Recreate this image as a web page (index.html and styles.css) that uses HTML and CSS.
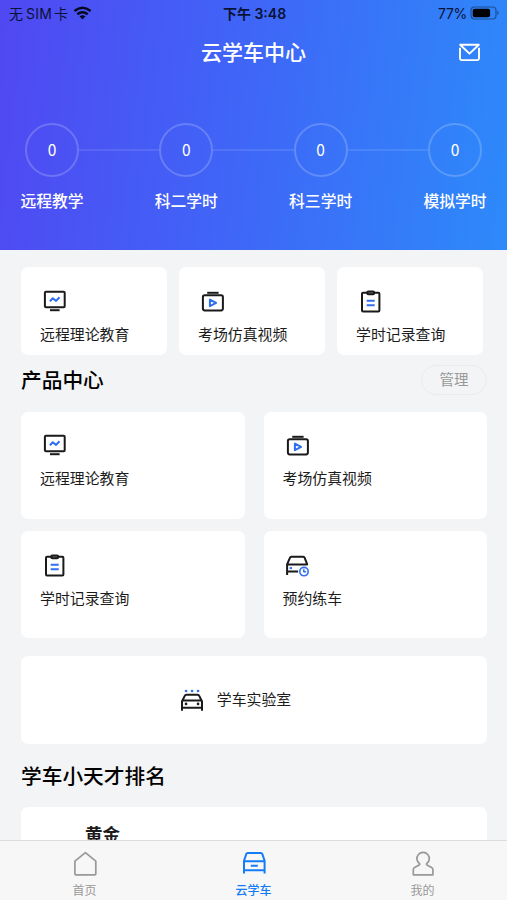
FILE: index.html
```
<!DOCTYPE html>
<html lang="zh-CN">

<head>
    <meta charset="UTF-8" />
    <meta name="viewport" content="width=device-width, initial-scale=1.0" />
    <title>云学车中心</title>
    <link rel="stylesheet" href="styles.css">
</head>

<body>
    <!-- shared icons -->
    <svg class="icon-defs" width="0" height="0">
        <symbol id="icon-screen" viewBox="0 0 24 24">
            <rect x="1.9" y="2.8" width="19.8" height="15.4" rx="1" />
            <path d="M7 21.2h9.6" />
            <path class="blue" d="M6.9 12.3l2.9-3 3.3 2.6 3.4-3.6" />
        </symbol>
        <symbol id="icon-video" viewBox="0 0 24 24">
            <path d="M6.2 3.8h11.4" />
            <rect x="1.9" y="6.2" width="20" height="15.2" rx="1.8" />
            <path class="blue" d="M8.9 10.6v6.6l6.2-3.3z" />
        </symbol>
        <symbol id="icon-record" viewBox="0 0 24 24">
            <rect x="3" y="3.8" width="17.4" height="18.6" rx="1" />
            <rect class="clip" x="8.3" y="2.4" width="6.8" height="2.8" rx="1" />
            <path class="blue" d="M7.7 11.7h8M7.7 16.2h8" />
        </symbol>
        <symbol id="icon-booking" viewBox="0 0 24 24">
            <path d="M1.1 21.9V11.4L3.9 4.8q.4-1 1.4-1h12q1 0 1.4 1l2.5 6.6H1.1M1.1 18.6h11" />
            <path class="blue" d="M3.6 15.1h2.4" />
            <circle class="blue thin" cx="18" cy="18.6" r="4.2" />
            <path class="blue thin" d="M17.8 16.2v2.5h2.3" />
        </symbol>
        <symbol id="icon-lab" viewBox="0 0 24 24">
            <path d="M2 22.8v-9.3l2.6-5.4q.6-1.3 1.9-1.3h11q1.3 0 1.9 1.3l2.6 5.4v9.3M2 12.5h20M2 19.7h20" />
            <path class="dot" d="M6 15.9h.1M18 15.9h.1" />
            <path class="blue dot" d="M6 3h.1M12 3h.1M18 3h.1" />
        </symbol>
    </svg>

    <div class="app">
        <header class="header">
            <div class="status-bar">
                <div class="status-left">
                    <span>无<span class="sim">SIM</span>卡</span>
                    <svg class="wifi" viewBox="0 0 20 15">
                        <path d="M1.3 5.3q8.7-7 17.4 0M4.4 8.8q5.6-4.4 11.2 0" />
                        <path class="wifi-dot" d="M6.8 11.1q3.2-2.4 6.4 0L10 14.4z" />
                    </svg>
                </div>
                <div class="status-time">下午 3:48</div>
                <div class="status-right">
                    <span>77%</span>
                    <svg class="battery" viewBox="0 0 30 14">
                        <rect class="battery-shell" x="1" y="1" width="25" height="12" rx="3.4" />
                        <rect x="2.7" y="2.7" width="17.4" height="8.6" rx="2" />
                        <path class="battery-tip" d="M27.4 4.6q2.6 2.4 0 4.8z" />
                    </svg>
                </div>
            </div>

            <div class="nav-bar">
                <h1>云学车中心</h1>
                <svg class="mail" viewBox="0 0 24 20">
                    <path d="M2 5v11.4q0 1.6 1.6 1.6h16.8q1.6 0 1.6-1.6V5" />
                    <path d="M2.2 1.8h19.6L12 11.2z" />
                </svg>
            </div>

            <div class="progress">
                <div class="step">
                    <div class="circle">0</div>
                    <div class="step-name">远程教学</div>
                </div>
                <div class="line"></div>
                <div class="step">
                    <div class="circle">0</div>
                    <div class="step-name">科二学时</div>
                </div>
                <div class="line"></div>
                <div class="step">
                    <div class="circle">0</div>
                    <div class="step-name">科三学时</div>
                </div>
                <div class="line"></div>
                <div class="step">
                    <div class="circle">0</div>
                    <div class="step-name">模拟学时</div>
                </div>
            </div>
        </header>

        <main class="content">
            <div class="quick-row">
                <div class="card">
                    <svg class="icon"><use href="#icon-screen" /></svg>
                    <p>远程理论教育</p>
                </div>
                <div class="card">
                    <svg class="icon"><use href="#icon-video" /></svg>
                    <p>考场仿真视频</p>
                </div>
                <div class="card">
                    <svg class="icon"><use href="#icon-record" /></svg>
                    <p>学时记录查询</p>
                </div>
            </div>

            <div class="section-title">
                <h2>产品中心</h2>
                <button class="manage">管理</button>
            </div>

            <div class="product-grid">
                <div class="card">
                    <svg class="icon"><use href="#icon-screen" /></svg>
                    <p>远程理论教育</p>
                </div>
                <div class="card">
                    <svg class="icon"><use href="#icon-video" /></svg>
                    <p>考场仿真视频</p>
                </div>
                <div class="card">
                    <svg class="icon"><use href="#icon-record" /></svg>
                    <p>学时记录查询</p>
                </div>
                <div class="card">
                    <svg class="icon"><use href="#icon-booking" /></svg>
                    <p>预约练车</p>
                </div>
            </div>

            <div class="lab">
                <svg class="icon"><use href="#icon-lab" /></svg>
                <p>学车实验室</p>
            </div>

            <h2 class="rank-title">学车小天才排名</h2>
            <div class="rank-card">黄金</div>
        </main>

        <nav class="tab-bar">
            <div class="tab">
                <svg class="tab-icon" viewBox="0 0 26 26">
                    <path d="M2.9 10.2L13.4 1.6l10.4 8.6v12.6q0 1-1 1H3.9q-1 0-1-1z" />
                </svg>
                <span>首页</span>
            </div>
            <div class="tab active">
                <svg class="tab-icon" viewBox="0 0 26 26">
                    <path d="M3 22.4V9.8l2.2-6.6q.4-1.1 1.5-1.1h13.2q1.1 0 1.5 1.1l2.2 6.6v12.6M3 10.2h20.6M3 19.2h20.6M9.8 14.8h7" />
                </svg>
                <span>云学车</span>
            </div>
            <div class="tab">
                <svg class="tab-icon" viewBox="0 0 26 26">
                    <path d="M9.6 12.7a6.2 6.2 0 1 1 7 0v1l5 2.8q1.3.8 1.3 2v5.3H3.3v-5.3q0-1.2 1.3-2l5-2.8z" />
                </svg>
                <span>我的</span>
            </div>
        </nav>
    </div>
</body>

</html>
```
FILE: styles.css
```
:root {
    --page-bg: #f2f4f5;
    --card-bg: #ffffff;
    --text: #1c1c1c;
    --blue: #2f6ff0;
    --active: #147df5;
    --muted: #999999;
}

* {
    box-sizing: border-box;
}

body {
    margin: 0;
    font-family: "Liberation Sans", "Noto Sans CJK SC", sans-serif;
    background: var(--page-bg);
    color: var(--text);
}

h1,
h2,
p {
    margin: 0;
}

svg {
    display: block;
    fill: none;
    stroke-linejoin: round;
}

.icon-defs {
    position: absolute;
}

.app {
    display: flex;
    flex-direction: column;
    height: 900px;
    overflow: hidden;
}

/* Header */
.header {
    flex: none;
    height: 250px;
    background: linear-gradient(97deg, #5048f2 0%, #3f66f7 48%, #2d8afa 100%);
    color: #fff;
}

.status-bar {
    display: grid;
    grid-template-columns: 1fr auto 1fr;
    align-items: center;
    height: 28px;
    padding: 0 7px 0 9px;
    font-family: Inter, "Noto Sans CJK SC", sans-serif;
    font-size: 14px;
    line-height: 20px;
    color: #0b1238;
}

.status-left,
.status-right {
    display: flex;
    align-items: center;
}

.status-left {
    gap: 5px;
}

.sim {
    margin: 0 2px 0 3px;
    letter-spacing: 0.2px;
}

.status-right {
    justify-content: flex-end;
    gap: 3px;
}

.status-right span {
    letter-spacing: -0.3px;
}

.status-time {
    font-weight: 600;
}

.wifi {
    width: 19px;
    height: 14px;
    margin-bottom: 2px;
    stroke: #050a20;
    stroke-width: 2.6;
}

.wifi-dot {
    fill: #050a20;
    stroke: none;
}

.battery {
    width: 30px;
    height: 14px;
    margin-bottom: 2px;
    fill: #000;
}

.battery-shell {
    fill: none;
    stroke: #1d4f94;
    stroke-width: 1.2;
}

.battery-tip {
    fill: #1d4f94;
}

.nav-bar {
    display: grid;
    grid-template-columns: 1fr auto 1fr;
    align-items: center;
    height: 48px;
    padding: 1px 26px 0;
}

.nav-bar h1 {
    grid-column: 2;
    padding-top: 1px;
    font-size: 21px;
    line-height: 30px;
    font-weight: 500;
}

.mail {
    justify-self: end;
    width: 23px;
    height: 19px;
    stroke: #fff;
    stroke-width: 2;
}

.progress {
    display: flex;
    padding: 47px 20px 0;
}

.step {
    display: flex;
    flex-direction: column;
    align-items: center;
    width: 64px;
}

.circle {
    display: flex;
    align-items: center;
    justify-content: center;
    width: 54px;
    height: 54px;
    padding-bottom: 2px;
    border: 2px solid rgba(255, 255, 255, 0.2);
    border-radius: 50%;
    font-family: "Noto Sans CJK SC", sans-serif;
    font-size: 15.5px;
    line-height: 20px;
}

.step-name {
    margin-top: 14px;
    font-size: 15.8px;
    line-height: 22px;
    font-weight: 500;
    white-space: nowrap;
}

.line {
    flex: 1;
    height: 2px;
    margin: 26px -5px 0;
    background: rgba(255, 255, 255, 0.1);
}

/* Cards */
.content {
    flex: 1;
    min-height: 0;
    overflow: hidden;
    padding: 17px 20px 0 21px;
}

.quick-row {
    display: grid;
    grid-template-columns: repeat(3, 146px);
    gap: 12px;
}

.card {
    height: 88px;
    padding: 22px 19px 0;
    background: var(--card-bg);
    border-radius: 7px;
}

.card p,
.lab p {
    font-size: 14.9px;
    line-height: 22px;
    white-space: nowrap;
}

.card p {
    margin-top: 11px;
}

.icon {
    width: 24px;
    height: 24px;
    margin-left: 3px;
    stroke: #1a1a1a;
    stroke-width: 2;
}

.blue {
    stroke: var(--blue);
}

.clip {
    fill: #777;
}

.thin {
    stroke-width: 1.6;
}

.dot {
    stroke-width: 2.6;
    stroke-linecap: round;
}

.section-title {
    display: flex;
    align-items: center;
    justify-content: space-between;
    height: 57px;
    padding-bottom: 7px;
}

h2 {
    padding-top: 2px;
    font-size: 20.7px;
    line-height: 30px;
    font-weight: 500;
    color: #000;
}

.manage {
    width: 66px;
    height: 30px;
    padding: 0;
    border: 1px solid #e9ebec;
    border-radius: 15px;
    background: transparent;
    font-family: inherit;
    font-size: 14.5px;
    line-height: 20px;
    color: var(--muted);
}

.product-grid {
    display: grid;
    grid-template-columns: 1fr 1fr;
    gap: 12px 19px;
}

.product-grid .card {
    height: 107px;
}

.product-grid .card:nth-child(-n+2) {
    padding-top: 21px;
}

.lab {
    display: flex;
    align-items: center;
    justify-content: center;
    gap: 13px;
    height: 88px;
    margin-top: 18px;
    padding-right: 40px;
    background: var(--card-bg);
    border-radius: 7px;
}

.rank-title {
    margin: 16px 0 15px;
}

.rank-card {
    height: 100px;
    padding: 15px 0 0 64px;
    background: var(--card-bg);
    border-radius: 7px;
    font-size: 17.5px;
    line-height: 26px;
    font-weight: 700;
}

/* Bottom tabs */
.tab-bar {
    display: flex;
    flex: none;
    height: 60px;
    border-top: 1px solid #dcddde;
    background: #f7f7f7;
}

.tab {
    display: flex;
    flex: 1;
    flex-direction: column;
    align-items: center;
    padding-top: 10px;
    font-size: 12px;
    line-height: 18px;
    color: var(--muted);
}

.tab-icon {
    width: 26px;
    height: 26px;
    margin-bottom: 5px;
    stroke: currentColor;
    stroke-width: 1.7;
}

.active {
    color: var(--active);
    font-weight: 500;
}

.active .tab-icon {
    stroke-width: 2;
}
```
